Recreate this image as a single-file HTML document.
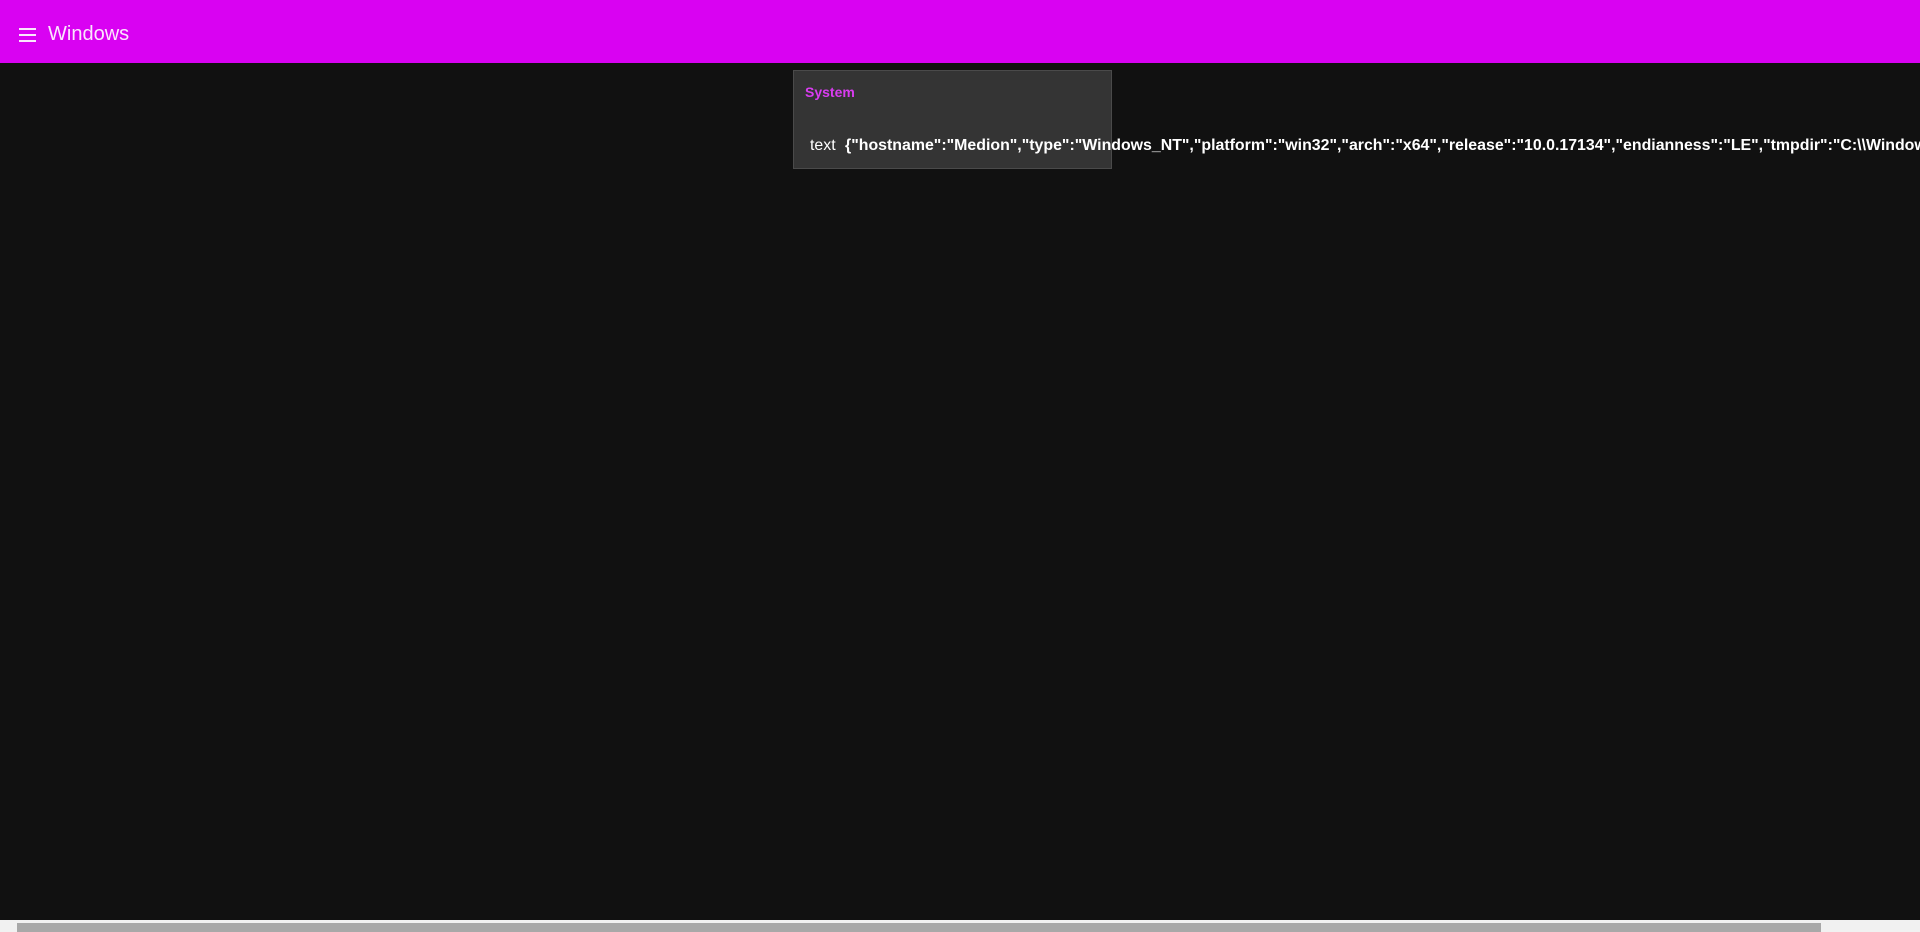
<!DOCTYPE html>
<html><head><style>
html,body{margin:0;padding:0;width:1920px;height:932px;overflow:hidden;background:#111;font-family:"Liberation Sans",sans-serif}
.hdr{position:absolute;left:0;top:0;width:1920px;height:63px;background:#d902f2;}
.hdr .t{position:absolute;left:48px;top:23px;color:#fbe6fd;font-size:20px;}
.ham{position:absolute;left:19px;top:28px;width:17px;}
.ham i{display:block;height:2px;background:#fbe6fd;margin-bottom:4px}
.card{position:absolute;left:793px;top:70px;width:319px;height:99px;background:#343434;border:1px solid #4a4a4a;box-sizing:border-box}
.ttl{position:absolute;left:805px;top:84px;color:#d93cf0;font-size:14px;font-weight:bold}
.line{position:absolute;left:810px;top:137px;color:#fff;font-size:15.9px;white-space:nowrap}
.line b{margin-left:5px}
.sb{position:absolute;left:0;top:920px;width:1920px;height:12px;background:#f1f1f1}
.th{position:absolute;left:17px;top:923px;width:1804px;height:9px;background:#a8a8a8}
</style></head><body>
<div class="hdr"><div class="ham"><i></i><i></i><i></i></div><div class="t">Windows</div></div>
<div class="card"></div>
<div class="ttl">System</div>
<div class="line">text <b>{"hostname":"Medion","type":"Windows_NT","platform":"win32","arch":"x64","release":"10.0.17134","endianness":"LE","tmpdir":"C:\\Windows\\Temp"}</b></div>
<div class="sb"></div><div class="th"></div>
</body></html>
